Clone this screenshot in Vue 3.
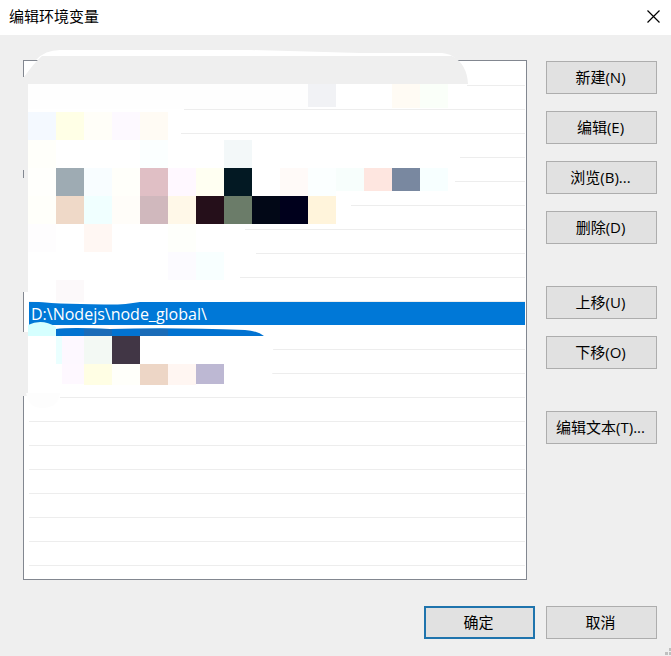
<script setup>
import { ref } from 'vue'

const rows = Array.from({ length: 21 }, (_, i) => (i === 10 ? 'D:\\Nodejs\\node_global\\' : ''))
const selected = ref(10)

const actionGroups = [
  ['新建(N)', '编辑(E)', '浏览(B)...', '删除(D)'],
  ['上移(U)', '下移(O)'],
  ['编辑文本(T)...'],
]

// Mosaic tiles over the redacted entries: x, y, width, height, colour
const tiles = [
  [28, 84, 280, 25, '#fefefe'],
  [308, 84, 28, 23, '#f1f2f5'],
  [392, 84, 28, 24, '#fffbf4'],
  [420, 84, 28, 24, '#fafff9'],
  [28, 112, 28, 28, '#f4f9ff'],
  [56, 112, 28, 28, '#ffffe6'],
  [84, 112, 28, 28, '#fffef8'],
  [112, 112, 28, 28, '#fdf9ff'],
  [140, 112, 28, 28, '#fffbf4'],
  [28, 140, 28, 28, '#fffffa'],
  [140, 140, 28, 28, '#fbffff'],
  [224, 140, 28, 28, '#f3f8f9'],
  [28, 168, 28, 28, '#fffffc'],
  [56, 168, 28, 28, '#9eabb3'],
  [84, 168, 28, 28, '#f8fdff'],
  [112, 168, 28, 28, '#fffffa'],
  [140, 168, 28, 28, '#e0bfc5'],
  [168, 168, 28, 28, '#fff8ff'],
  [196, 168, 28, 28, '#fffff2'],
  [224, 168, 28, 28, '#031923'],
  [280, 168, 28, 28, '#fffaf8'],
  [308, 168, 28, 28, '#fbffff'],
  [336, 168, 28, 23, '#f7fefc'],
  [364, 168, 28, 23, '#fee6e0'],
  [392, 168, 28, 23, '#7988a0'],
  [420, 168, 28, 23, '#f7ffff'],
  [28, 196, 28, 28, '#fffffa'],
  [56, 196, 28, 28, '#efd9c8'],
  [84, 196, 28, 28, '#f0ffff'],
  [112, 196, 28, 28, '#fffdf9'],
  [140, 196, 28, 28, '#d0b8bd'],
  [168, 196, 28, 28, '#fff8e8'],
  [196, 196, 28, 28, '#250f1a'],
  [224, 196, 28, 28, '#6b7c69'],
  [252, 196, 28, 28, '#020817'],
  [280, 196, 28, 28, '#00001c'],
  [308, 196, 28, 28, '#fff4db'],
  [28, 224, 28, 28, '#fefdfe'],
  [84, 224, 28, 28, '#fff7f3'],
  [168, 224, 28, 28, '#fefffb'],
  [168, 252, 28, 28, '#fcfbff'],
  [196, 252, 28, 28, '#f8ffff'],
  [56, 280, 28, 22, '#fcf9fa'],
  [56, 336, 6, 28, '#eaffff'],
  [62, 336, 22, 28, '#fdf8ff'],
  [84, 336, 28, 28, '#f3f9f4'],
  [112, 336, 28, 28, '#413645'],
  [62, 364, 22, 20, '#fef8ff'],
  [84, 364, 28, 21, '#fffee4'],
  [112, 364, 28, 21, '#fffffa'],
  [140, 364, 28, 21, '#edd6c6'],
  [168, 364, 28, 21, '#fff6f2'],
  [196, 364, 28, 20, '#bdb8d3'],
]
</script>

<template>
  <main class="dialog">
    <header class="titlebar">
      <h1>编辑环境变量</h1>
      <button class="close" type="button" aria-label="关闭">
        <svg width="13" height="13" viewBox="0 0 13 13">
          <path d="M.5 .5 12.500 12.500 M12.500 .5 .5 12.500" fill="none" stroke="#000" stroke-width="1.2" />
        </svg>
      </button>
    </header>

    <div class="body">
      <div class="listbox">
        <ul role="listbox" aria-label="编辑环境变量">
          <li
            v-for="(row, i) in rows"
            :key="i"
            role="option"
            :aria-selected="i === selected"
            :class="{ selected: i === selected }"
            @click="selected = i"
          >{{ row }}</li>
        </ul>
        <svg class="redaction" width="460" height="370" viewBox="20 45 460 370" aria-hidden="true">
          <!-- erased parts of the frame -->
          <path d="M20 77H24L28 73V170H20Z M20 178H28V292H20Z M20 332H28V396H20Z M20 170H23V178H20Z" fill="#efefef" />
          <path d="M24 170H28V178H24Z" fill="#efefef" />
          <!-- erased entries -->
          <path
            d="M28 84H467V86H464V109H184V132H181V140H460V170H455V192H351V220H245V250H256V264H240V302H140Q124 305 104 304.500Q55 304 28 301Z"
            fill="#fff"
          />
          <path d="M28 84H184V112H28Z" fill="#fff" />
          <path d="M28 325H270Q276 350 271 385H60V398H28Z" fill="#fff" />
          <path d="M26 393H60Q58 408 42 408Q29 408 26 393Z" fill="#fdfdfd" />
          <rect v-for="(t, i) in tiles" :key="i" :x="t[0]" :y="t[1]" :width="t[2]" :height="t[3]" :fill="t[4]" />
          <!-- strokes over the first row -->
          <path d="M36 60Q45 50 60 50H250L360 53H442Q451 54 455 58Z" fill="#fff" />
          <path d="M24 84V77Q34 63 42 56H452Q467 64 468 84Z" fill="#efefef" />
          <!-- strokes below the selected row -->
          <path d="M28 336V325Q42 318 56 327V336Z" fill="#d5ffff" />
          <path d="M56 336V329Q70 327 110 329Q170 327 245 330Q258 331 264 336Z" fill="#0273d1" />
          <path d="M84 336V329H112V336Z M140 336V329H168V336Z" fill="#1a6cb8" />
        </svg>
      </div>

      <nav class="actions">
        <div v-for="(group, g) in actionGroups" :key="g" class="group">
          <button v-for="label in group" :key="label" class="btn" type="button">{{ label }}</button>
        </div>
      </nav>
    </div>

    <footer class="footer">
      <button class="btn primary" type="button">确定</button>
      <button class="btn" type="button">取消</button>
    </footer>

    <svg class="grip" width="6" height="8" viewBox="0 0 6 8" aria-hidden="true">
      <path d="M0 4H3V7H0Z M4 0H6V3H4Z M4 4H6V7H4Z" fill="#bfbfbf" />
    </svg>
  </main>
</template>

<style>
body {
  margin: 0;
  background: #efefef;
}
</style>

<style scoped>
.dialog {
  position: relative;
  box-sizing: border-box;
  min-height: 100vh;
  display: flex;
  flex-direction: column;
  background: #efefef;
  color: #000;
  font-family: "Open Sans", "Noto Sans CJK SC", sans-serif;
  font-size: 15px;
}

.titlebar {
  display: flex;
  align-items: center;
  justify-content: space-between;
  box-sizing: border-box;
  height: 35px;
  padding: 0 11px 3px 9px;
  background: #fff;
}

.titlebar h1 {
  margin: 0;
  font-size: 15px;
  font-weight: 400;
  line-height: 20px;
}

.close {
  display: flex;
  padding: 0;
  border: 0;
  background: none;
}

.body {
  display: flex;
  align-items: flex-start;
  gap: 19px;
  padding: 25px 14px 0 23px;
}

.listbox {
  position: relative;
  flex: 1;
  min-width: 0;
  border: 1px solid #828790;
  background: #fff;
}

.listbox ul {
  margin: 0;
  padding: 1px 1px 13px 5px;
  list-style: none;
}

.listbox li {
  box-sizing: border-box;
  height: 24px;
  padding-left: 2px;
  border-bottom: 1px solid #ededed;
  font-size: 16px;
  line-height: 24px;
  white-space: nowrap;
}

.listbox li.selected {
  background: #0078d7;
  background-clip: padding-box;
  border-bottom-color: #fff;
  color: #fff;
}

.redaction {
  position: absolute;
  left: -4px;
  top: -16px;
  pointer-events: none;
}

.actions {
  display: flex;
  flex-direction: column;
  gap: 42px;
  padding-top: 1px;
}

.group {
  display: flex;
  flex-direction: column;
  gap: 17px;
}

.btn {
  box-sizing: border-box;
  width: 111px;
  height: 33px;
  padding: 0 2px 2px 0;
  border: 1px solid #adadad;
  border-radius: 0;
  background: #e1e1e1;
  color: #000;
  font: inherit;
  line-height: 20px;
  white-space: nowrap;
}

.btn.primary {
  border: 2px solid #1f74ad;
}

.footer {
  display: flex;
  justify-content: flex-end;
  gap: 11px;
  padding: 26px 14px 17px;
}

.grip {
  position: absolute;
  right: 0;
  bottom: 0;
}
</style>
